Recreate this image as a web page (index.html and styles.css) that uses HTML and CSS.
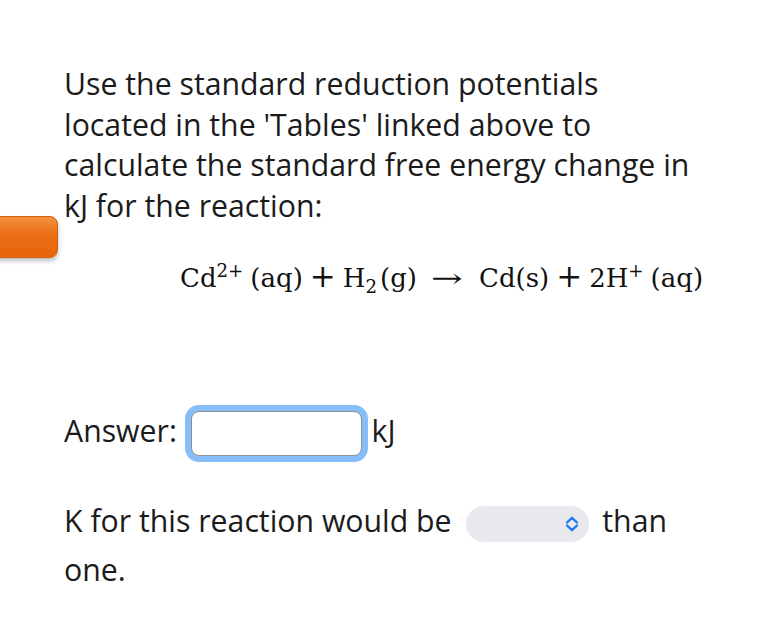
FILE: index.html
```html
<!DOCTYPE html>
<html lang="en">
  <head>
    <meta charset="utf-8" />
    <title>question</title>
    <link rel="stylesheet" href="styles.css">
  </head>

  <body>
    <button class="side-tab" aria-label="menu"></button>

    <div class="question">
      <p class="prompt">
        Use the standard reduction potentials located in the 'Tables' linked above to
        calculate the standard free energy change in kJ for the reaction:
      </p>

      <div class="equation">
        <span>Cd<sup>2+</sup></span><span class="paren">(aq)</span><span class="op">+</span><span>H<sub>2</sub></span><span class="paren sm">(g)</span><span class="arrow">&rarr;</span><span>Cd(s)</span><span class="op">+</span><span>2H<sup>+</sup></span><span class="paren">(aq)</span>
      </div>

      <p class="answer">
        Answer:
        <input class="answer-input" type="text" />
        kJ
      </p>

      <p class="compare">
        K for this reaction would be
        <span class="select-wrap">
          <select class="compare-select">
            <option value=""></option>
            <option value="greater">greater</option>
            <option value="less">less</option>
          </select>
          <svg class="chevrons" width="14" height="16" viewBox="0 0 14 16">
            <path d="M2 6.5 L7 1.8 L12 6.5 M2 9.5 L7 14.2 L12 9.5" fill="none" stroke="#1f7af0" stroke-width="2.4" stroke-linecap="round" stroke-linejoin="round"/>
          </svg>
        </span>
        than one.
      </p>
    </div>
  </body>
</html>
```

FILE: styles.css
```css
body {
  margin: 0;
  position: relative;
  background: #fff;
  color: #1b1b1b;
  font-family: "Open Sans", "Noto Sans", sans-serif;
  font-size: 30.25px;
  line-height: 40.5px;
}

.side-tab {
  position: absolute;
  left: -20px;
  top: 216px;
  width: 78px;
  height: 42px;
  border: 1px solid #d45f0c;
  border-radius: 8px;
  background: linear-gradient(#f3903f, #ea6e14 45%, #e8650c);
  box-shadow: 0 3px 4px rgba(0, 0, 0, 0.25);
}

.question {
  padding: 64px 0 0 64px;
  width: 636px;
}

.prompt {
  margin: 0;
}

.equation {
  margin: 32px 0 0 0;
  padding-left: 116px;
  font-family: "DejaVu Serif", "Liberation Serif", serif;
  font-size: 26px;
  line-height: 40px;
  white-space: nowrap;
  color: #111;
}

.equation sup,
.equation sub {
  font-size: 0.7em;
  line-height: 0;
}

.equation .paren {
  margin-left: 7px;
}

.equation .paren.sm {
  margin-left: 3px;
}

.equation .op {
  margin: 0 7px;
  font-size: 31px;
  line-height: 0;
}

.equation .arrow {
  display: inline-block;
  width: 34px;
  margin: 0 14px 0 14px;
  transform: scaleX(1.45);
  transform-origin: left center;
  line-height: 0;
}

.answer {
  margin: 113px 0 0 0;
}

.answer-input {
  box-sizing: border-box;
  width: 171px;
  height: 45px;
  margin: 0 2px 0 6px;
  vertical-align: middle;
  border: 1.5px solid #8f8f8f;
  border-radius: 8px;
  outline: none;
  box-shadow: 0 0 0 6px #88bdfb;
  font: inherit;
}

.compare {
  margin: 40px 0 0 0;
  line-height: 49px;
  width: 620px;
}

.select-wrap {
  position: relative;
  display: inline-block;
  vertical-align: middle;
  margin: 0 5px 0 7px;
}

.compare-select {
  appearance: none;
  -webkit-appearance: none;
  display: block;
  width: 123px;
  height: 36px;
  border: none;
  border-radius: 18px;
  background: #e9e9ed;
  font: inherit;
  font-size: 18px;
}

.chevrons {
  position: absolute;
  left: 99px;
  top: 10px;
  pointer-events: none;
}
```
